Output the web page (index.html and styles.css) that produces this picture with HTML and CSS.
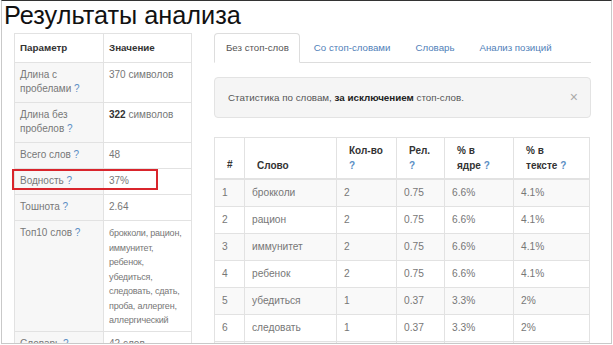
FILE: index.html
```html
<!DOCTYPE html>
<html lang="ru">
    <head>
        <meta charset="UTF-8" />
        <meta name="viewport" content="width=device-width, initial-scale=1.0" />
        <title>Результаты анализа</title>
        <link rel="stylesheet" href="styles.css">
    </head>
    <body>
        <div class="frame">
            <h1 class="title">Результаты анализа</h1>
            <div class="layout">
                <aside class="summary">
                    <table class="params">
                        <colgroup><col class="c-name"><col class="c-value"></colgroup>
                        <thead>
                            <tr><th>Параметр</th><th>Значение</th></tr>
                        </thead>
                        <tbody>
                            <tr><td class="name">Длина с пробелами <span class="hint">?</span></td><td>370 символов</td></tr>
                            <tr><td class="name">Длина без пробелов <span class="hint">?</span></td><td><b>322</b> символов</td></tr>
                            <tr><td class="name">Всего слов <span class="hint">?</span></td><td>48</td></tr>
                            <tr><td class="name marked">Водность <span class="hint">?</span><span class="mark"></span></td><td>37%</td></tr>
                            <tr><td class="name">Тошнота <span class="hint">?</span></td><td>2.64</td></tr>
                            <tr>
                                <td class="name">Топ10 слов <span class="hint">?</span></td>
                                <td class="top-words">брокколи, рацион,<br>иммунитет,<br>ребенок,<br>убедиться,<br>следовать, сдать,<br>проба, аллерген,<br>аллергический</td>
                            </tr>
                            <tr><td class="name">Словарь <span class="hint">?</span></td><td>42 слов</td></tr>
                        </tbody>
                    </table>
                </aside>

                <main class="words">
                    <ul class="tabs">
                        <li><a class="active">Без стоп-слов</a></li>
                        <li><a>Со стоп-словами</a></li>
                        <li><a>Словарь</a></li>
                        <li><a>Анализ позиций</a></li>
                    </ul>

                    <div class="alert">
                        Статистика по словам, <b>за исключением</b> стоп-слов.
                        <span class="close">&times;</span>
                    </div>

                    <table class="stats">
                        <colgroup>
                            <col class="w-num"><col class="w-word"><col class="w-count">
                            <col class="w-rel"><col class="w-core"><col class="w-text">
                        </colgroup>
                        <thead>
                            <tr>
                                <th class="solo">#</th>
                                <th>Слово</th>
                                <th>Кол-во<br><span class="hint">?</span></th>
                                <th>Рел.<br><span class="hint">?</span></th>
                                <th>% в<br>ядре <span class="hint">?</span></th>
                                <th>% в<br>тексте <span class="hint">?</span></th>
                            </tr>
                        </thead>
                        <tbody>
                            <tr><td>1</td><td>брокколи</td><td>2</td><td>0.75</td><td>6.6%</td><td>4.1%</td></tr>
                            <tr><td>2</td><td>рацион</td><td>2</td><td>0.75</td><td>6.6%</td><td>4.1%</td></tr>
                            <tr><td>3</td><td>иммунитет</td><td>2</td><td>0.75</td><td>6.6%</td><td>4.1%</td></tr>
                            <tr><td>4</td><td>ребенок</td><td>2</td><td>0.75</td><td>6.6%</td><td>4.1%</td></tr>
                            <tr><td>5</td><td>убедиться</td><td>1</td><td>0.37</td><td>3.3%</td><td>2%</td></tr>
                            <tr><td>6</td><td>следовать</td><td>1</td><td>0.37</td><td>3.3%</td><td>2%</td></tr>
                            <tr><td>7</td><td>сдать</td><td>1</td><td>0.37</td><td>3.3%</td><td>2%</td></tr>
                        </tbody>
                    </table>
                </main>
            </div>
        </div>
    </body>
</html>
```

FILE: styles.css
```css
body {
  margin: 0;
  font-family: "Liberation Sans", Arial, sans-serif;
  color: #777;
  background: #fff;
}

.frame {
  margin: 0 1px;
  height: 344px;
  box-sizing: border-box;
  border: 1px solid #c9c9c9;
  border-top-color: #333;
  overflow: hidden;
}

.title {
  margin: 0;
  padding-left: 2px;
  font-size: 25.3px;
  line-height: 28px;
  font-weight: normal;
  color: #111;
}

.layout {
  display: flex;
  margin-top: 4px;
  padding-left: 12px;
  gap: 22px;
}

/* left table */

.params {
  width: 177px;
  table-layout: fixed;
  border-collapse: collapse;
  font-size: 10px;
  line-height: 14px;
}

.c-name { width: 89px; }
.c-value { width: 88px; }

.params th,
.params td {
  border: 1px solid #e2e2e2;
  padding: 5px 5px 6px;
  text-align: left;
  vertical-align: top;
}

.params th {
  color: #333;
  font-size: 9.8px;
  padding: 7px 5px 7px;
}

.params td.name {
  background-color: #f7f7f7;
}

.params b {
  color: #333;
}

.params .top-words {
  font-size: 9px;
  letter-spacing: -0.2px;
  line-height: 14.5px;
  padding-top: 5px;
  padding-bottom: 3px;
  white-space: nowrap;
}

.hint {
  color: #5b8ec4;
}

.marked {
  position: relative;
}

.mark {
  position: absolute;
  left: -3px;
  top: 0;
  width: 142px;
  height: 17px;
  border: 2px solid #d9252c;
}

/* right side */

.words {
  width: 377px;
}

.tabs {
  display: flex;
  list-style: none;
  margin: 0;
  padding: 0;
  border-bottom: 1px solid #ddd;
  font-size: 9.7px;
  white-space: nowrap;
}

.tabs a {
  display: block;
  padding: 0 10px 0 11px;
  margin-right: 2px;
  margin-bottom: -1px;
  line-height: 28px;
  color: #4f80b8;
  border: 1px solid transparent;
  border-radius: 4px 4px 0 0;
}

.tabs a.active {
  color: #555;
  background-color: #fff;
  border-color: #ddd #ddd transparent;
}

.alert {
  position: relative;
  margin-top: 14px;
  padding: 10px 13px;
  line-height: 19px;
  font-size: 9.8px;
  color: #555;
  background-color: #f5f5f5;
  border: 1px solid #e3e3e3;
  border-radius: 4px;
}

.alert b {
  color: #222;
}

.close {
  position: absolute;
  right: 12px;
  top: 10px;
  color: #aaa;
  font-size: 14px;
}

.stats {
  margin-top: 19px;
  width: 376px;
  table-layout: fixed;
  border-collapse: collapse;
  font-size: 10.2px;
  line-height: 14px;
}

.w-num { width: 30px; }
.w-word { width: 92px; }
.w-count { width: 60px; }
.w-rel { width: 48px; }
.w-core { width: 69px; }
.w-text { width: 76px; }

.stats th,
.stats td {
  border: 1px solid #e2e2e2;
  text-align: left;
}

.stats th {
  color: #333;
  font-size: 10px;
  line-height: 15px;
  padding: 5px 6px 5px 12px;
  vertical-align: bottom;
  border-bottom-width: 2px;
}

.stats th.solo {
  padding-bottom: 6px;
}

.stats td {
  padding: 6px 7px;
}

.stats tbody tr:nth-child(odd) {
  background-color: #f9f9f9;
}
```
